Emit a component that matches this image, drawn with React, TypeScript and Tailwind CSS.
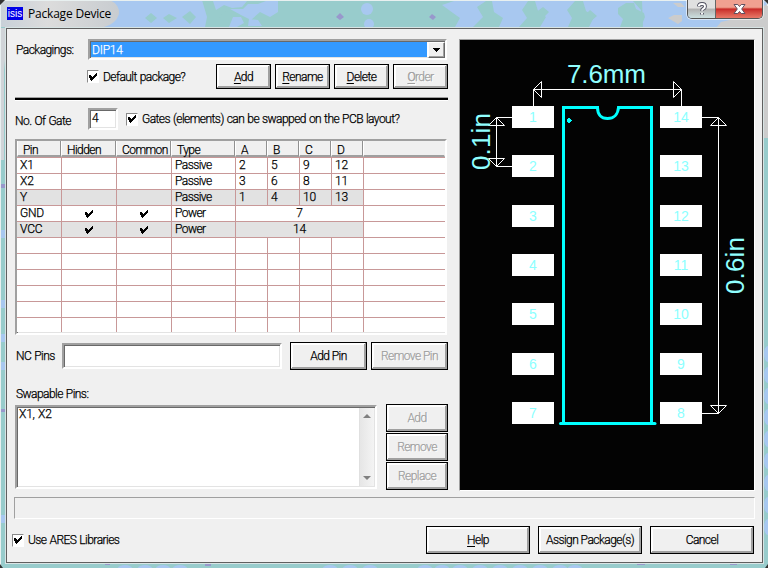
import React from "react";

const sunken =
  "border-2 border-t-[#a0a0a0] border-l-[#a0a0a0] border-r-white border-b-white shadow-[inset_1px_1px_0_#696969,inset_-1px_-1px_0_#e3e3e3]";

function Check() {
  return (
    <svg width="9" height="9" viewBox="0 0 9 9" shapeRendering="crispEdges" className="shrink-0">
      <path
        d="M7 0h1v1h-1zM6 1h2v1h-2zM0 2h2v1h-2zM5 2h3v1h-3zM0 3h3v1h-3zM4 3h3v1h-3zM0 4h6v1h-6zM1 5h4v1h-4zM1 6h3v1h-3zM2 7h1v1h-1z"
        fill="#000"
      />
    </svg>
  );
}

function CheckBox({ label }: { label: string }) {
  return (
    <div className="flex items-center gap-[4px]">
      <span className="flex h-[13px] w-[12px] shrink-0 items-center justify-center border border-b-white border-l-[#8a8a8a] border-r-white border-t-[#8a8a8a] bg-white pt-px">
        <Check />
      </span>
      <span>{label}</span>
    </div>
  );
}

function Button({ label, cls, hot, disabled }: { label: string; cls: string; hot?: boolean; disabled?: boolean }) {
  return (
    <button
      className={`flex shrink-0 items-center justify-center border border-black bg-[#f0f0f0] shadow-[inset_-1px_-1px_0_#a0a0a0,inset_1px_1px_0_#fff,inset_-2px_-2px_0_#a0a0a0,inset_2px_2px_0_#fff] ${
        disabled ? "text-[#a0a0a0] [text-shadow:1px_1px_0_#fff]" : "text-black"
      } ${cls}`}
    >
      <span>
        {hot ? <span className="underline underline-offset-2">{label[0]}</span> : label[0]}
        {label.slice(1)}
      </span>
    </button>
  );
}

const columns = ["Pin", "Hidden", "Common", "Type", "A", "B", "C", "D", ""];
const headWidths = ["w-[44px]", "w-[55px]", "w-[55px]", "w-[64px]", "w-[32px]", "w-[32px]", "w-[32px]", "w-[32px]", "w-[82px]"];
const widths = ["w-[45px]", "w-[55px]", "w-[55px]", "w-[64px]", "w-[32px]"];

type Row = { pin: string; flags?: boolean; type: string; gates?: string[]; shared?: string; shade?: boolean };
const rows: Row[] = [
  { pin: "X1", type: "Passive", gates: ["2", "5", "9", "12"] },
  { pin: "X2", type: "Passive", gates: ["3", "6", "8", "11"] },
  { pin: "Y", type: "Passive", gates: ["1", "4", "10", "13"], shade: true },
  { pin: "GND", type: "Power", flags: true, shared: "7" },
  { pin: "VCC", type: "Power", flags: true, shared: "14", shade: true },
  ...Array.from({ length: 6 }, () => ({ pin: "", type: "", gates: ["", "", "", ""] })),
];

function PinTable() {
  const line = "shrink-0 border-r border-b border-[#c89898] h-[16px] leading-[14px]";
  return (
    <div className={`mt-[9px] h-[196px] w-[432px] bg-white ${sunken}`}>
      <div className="-ml-px -mt-px h-[192px] overflow-hidden pl-px pt-px">
        <div className="flex h-[16px] bg-[#f0f0f0]">
          {columns.map((c, i) => (
            <div
              key={i}
              className={`${headWidths[i]} shrink-0 border-b-2 border-r border-b-[#a0a0a0] ${
                i === 8 ? "border-r-transparent" : "border-r-[#909090]"
              } border-l border-l-white pl-[5px] leading-[18px]`}
            >
              {c}
            </div>
          ))}
        </div>
        <div className="h-px bg-[#c89898]" />
        {rows.map((r, i) => {
          const bg = r.shade ? "bg-[#e2e2e2]" : "bg-white";
          return (
            <div key={i} className="flex h-[16px]">
              <div className={`${widths[0]} ${line} ${bg} pl-[3px] tracking-[-0.2px]`}>{r.pin}</div>
              {[1, 2].map((n) => (
                <div key={n} className={`${widths[n]} ${line} ${bg} flex items-center justify-center pt-px`}>
                  {r.flags && <Check />}
                </div>
              ))}
              <div className={`${widths[3]} ${line} ${bg} pl-[3px]`}>{r.type}</div>
              {r.gates ? (
                r.gates.map((g, n) => (
                  <div key={n} className={`${widths[4]} ${line} ${bg} pl-[3px] tracking-[-0.2px]`}>
                    {g}
                  </div>
                ))
              ) : (
                <div className={`w-[128px] text-center tracking-[-0.2px] ${line} ${bg}`}>{r.shared}</div>
              )}
              <div className="h-[16px] w-[81px] shrink-0 border-b border-[#c89898] bg-white" />
            </div>
          );
        })}
      </div>
    </div>
  );
}

const padY = [106, 155, 205, 254, 303, 353, 402];

function Footprint() {
  return (
    <svg
      width="294"
      height="450"
      viewBox="460 40 294 450"
      className="block bg-[#030303] font-normal tracking-normal [-webkit-text-stroke:0] [word-spacing:0]"
      fontFamily="'Liberation Sans', Arial, sans-serif"
    >
      {padY.map((y, i) => (
        <g key={y}>
          <rect x="512" y={y} width="42" height="22" fill="#fff" />
          <rect x="660" y={y} width="42" height="22" fill="#fff" />
          <g fill="#8cffff" fontSize="14" textAnchor="middle">
            <text x="533" y={y + 16}>{i + 1}</text>
            <text x="681" y={y + 16}>{14 - i}</text>
          </g>
        </g>
      ))}
      <g stroke="#00ffff" strokeWidth="3" fill="none">
        <path d="M563.5 423V107.5H597.5C597.5 114 601 118.5 607.5 118.5S618 114 618.5 107.5H651.5V423" />
        <path d="M560.5 423.5H655" strokeLinecap="round" />
      </g>
      <path d="M567 119h1v-1h2v1h1v1h1v1h-1v1h-1v1h-2v-1h-1z" fill="#00ffff" shapeRendering="crispEdges" />
      <g stroke="#fff" fill="none">
        <path d="M533.5 106V89.5H681.5V106" />
        <path d="M533.5 89.5L541.5 81.5V97.5ZM681.5 89.5L673.5 81.5V97.5Z" />
        <path d="M512 117.5H496.5V166.5H512" />
        <path d="M496.5 117.5L488.5 125.5H504.5ZM496.5 166.5L488.5 158.5H504.5Z" />
        <path d="M702 117.5H718.5V413.5H702" />
        <path d="M718.5 117.5L710.5 125.5H726.5ZM718.5 413.5L710.5 405.5H726.5Z" />
      </g>
      <g fill="#90ffff" fontSize="26">
        <text x="567" y="83" textLength="79">7.6mm</text>
        <text transform="translate(490 170) rotate(-90)" textLength="57">0.1in</text>
        <text transform="translate(744 294) rotate(-90)" textLength="57">0.6in</text>
      </g>
    </svg>
  );
}

function FrameBackdrop() {
  return (
    <svg className="absolute inset-0" width="768" height="568" viewBox="0 0 768 568">
      <defs>
        <linearGradient id="glow" x1="0" x2="1">
          <stop offset="0" stopColor="#c8d0d8" />
          <stop offset=".4" stopColor="#dcdcdc" />
          <stop offset="1" stopColor="#c8ccd0" />
        </linearGradient>
      </defs>
      <rect width="768" height="568" fill="#98cccc" />
      <path d="M0 0H212V27H0Z" fill="#a8c8f0" />
      <path d="M0 28H7V40L4 70V160H0Z" fill="#d0d4d8" />
      <path d="M0 0H110Q120 5 119 14Q116 24 104 27H0Z" fill="url(#glow)" />
      <g fill="#98cccc">
        <path d="M145 18l6-5 6 5-6 5zM163 18l6-4 8 4-8 5zM182 17l8-6 6 6-6 7zM202 0h12v27h-9l2-10zM219 17l8-6 9 6-9 5z" />
      </g>
      <g fill="#a8c8f0">
        <path d="M213 1h34l-5 6-10 1-8-3-8 5zM230 9h13l5-5h10l8-3h12v11l-8 5-10-5-9 8-10-5zM233 17l8 0 3 6-7 4h-8zM249 19l9 1 4 6h-14z" />
        <circle cx="367" cy="9" r="6" />
        <circle cx="369" cy="24" r="5" />
        <path d="M442 5l12-4h32l-9 6 6 10-10 10h-18l5-9-7-5z" />
        <path d="M492 1h36l-6 9 5 8-8 9h-20l4-9-9-6z" />
        <path d="M535 1h40l-8 9 5 8-4 9h-28l6-10-8-6z" />
        <path d="M583 1h50l8 9-3 17h-49l5-10-8-6z" />
        <path d="M642 0h126v27H643z" />
      </g>
      <path d="M535 13l8-6 6 5-7 7zM584 16l6-6 7 6-6 5z" fill="#98cccc" />
      <path d="M618 8l8-5h8l2 6 8 4 1 4-4 10h-21l3-8-5-5z" fill="#98cccc" />
      <g fill="#ccc">
        <path d="M668 18l6-3h8v6l-4 3zM673 3h8l4 4h-7zM721 22l17-4 30-14v24h-52z" />
        <path d="M763 28h5v110h-5z" />
      </g>
      <g fill="#9898cc">
        <path d="M336 17l4-4 4 4-4 3zM429 17l3-3 4 3-3 3zM105 563h5v2h-5zM205 564h6v2h-6zM637 563h8v2h-8zM730 563h7v2h-7zM1 184h5v4H1zM1 409h5v3H1z" />
      </g>
      <g fill="#a8c8f0">
        {[230, 300, 334, 362, 515].map((y) => (
          <rect key={y} x="1" y={y} width="4" height="8" />
        ))}
        {[345, 366, 387, 408, 430, 452, 474, 496, 518].map((y) => (
          <ellipse key={y} cx="768" cy={y + 9} rx="4" ry="8" />
        ))}
        {[125, 145, 163, 180, 330, 350, 370, 425, 442, 460, 480, 500, 520, 540, 560, 575].map((x) => (
          <ellipse key={x} cx={x} cy="568" rx="7" ry="3" />
        ))}
      </g>
      <path d="M.5 568V5Q.5 .5 6 .5H762Q767.5 .5 767.5 6" fill="none" stroke="#e8f0f0" />
      <path d="M0 0H5L0 5ZM768 0V4L764 0ZM768 568H765L768 564ZM0 568V564L3 568Z" fill="#333" />
    </svg>
  );
}

function TitleBar() {
  return (
    <div className="relative flex h-[28px] shrink-0 items-start pl-[7px] font-normal tracking-normal [-webkit-text-stroke:0] [word-spacing:0]">
      <div className="mt-[7px] flex h-[13px] w-[16px] items-center justify-center bg-[#0000e8] font-['Liberation_Sans',sans-serif] text-[10px] leading-none text-white">
        isis
      </div>
      <div className="ml-[5px] mt-[5px] font-['Open_Sans','Noto_Sans',sans-serif] text-[12px] leading-[17px] tracking-[-0.2px] text-black">
        Package Device
      </div>
      <div className="ml-auto mr-[5px] flex h-[19px] w-[76px] overflow-hidden rounded-b-[5px] border border-t-0 border-[#555] shadow-[0_0_0_1px_#ffffff90]">
        <div className="flex w-[28px] items-center justify-center border-r border-[#666] bg-linear-to-b from-[#e0e0e0] from-45% via-[#b0b0b0] via-50% to-[#cce0e0]">
          <svg width="12" height="14" viewBox="0 0 12 14" fill="none">
            <path d="M2.8 4.5Q3 2 6 2T9 4.4Q9 6 7.2 6.8Q6 7.4 6 8.8M6 11v1.6" stroke="#505060" strokeWidth="3.8" />
            <path d="M2.8 4.2Q3 2 6 2T9 4.4Q9 6 7.2 6.8Q6 7.4 6 8.8M6 10.8v1.8" stroke="#fff" strokeWidth="1.9" />
          </svg>
        </div>
        <div className="flex flex-1 items-center justify-center bg-linear-to-b from-[#f0a090] from-40% via-[#c82828] via-50% to-[#e87868]">
          <svg width="13" height="12" viewBox="0 0 13 12">
            <path
              d="M1 1.5h3.8l1.7 2 1.7-2H12L8.7 6l3.3 4.5H8.2l-1.7-2-1.7 2H1L4.3 6z"
              fill="#fff"
              stroke="#605060"
            />
          </svg>
        </div>
      </div>
    </div>
  );
}

export default function App() {
  return (
    <div className="relative flex h-[568px] w-[768px] flex-col overflow-hidden whitespace-nowrap font-[Roboto,'Liberation_Sans',sans-serif] text-[12px] font-light leading-[14px] tracking-[-0.55px] text-black [-webkit-text-stroke:0.25px] [word-spacing:0.6px]">
      <FrameBackdrop />
      <TitleBar />
      <div className="relative ml-[6px] h-[535px] w-[757px] border border-[#606060] bg-[#f0f0f0] shadow-[0_0_0_1px_#d8e4e4]">
        <div className="flex gap-[11px] pl-[8px] pt-[10px]">
          <div className="w-[433px]">
            <div className="flex h-[21px] items-center">
              <div className="w-[73px] pl-px">Packagings:</div>
              <div className={`flex h-[21px] w-[359px] bg-white p-px pr-0 ${sunken}`}>
                <div className="h-[15px] flex-1 bg-[#3399ff] pl-px leading-[17px] tracking-[-0.2px] text-white">DIP14</div>
                <div className="ml-px flex h-[16px] w-[17px] items-center justify-center border border-b-[#696969] border-l-white border-r-[#696969] border-t-white bg-[#f0f0f0] shadow-[inset_-1px_-1px_0_#a0a0a0]">
                  <svg width="7" height="4" shapeRendering="crispEdges">
                    <path d="M0 0h7v1h-1v1h-1v1h-1v1h-1v-1h-1v-1h-1v-1h-1z" />
                  </svg>
                </div>
              </div>
            </div>
            <div className="mt-[4px] flex h-[25px] items-center pl-[72px]">
              <div className="w-[129px]">
                <CheckBox label="Default package?" />
              </div>
              <div className="flex gap-[4px]">
                <Button label="Add" hot cls="h-[25px] w-[55px]" />
                <Button label="Rename" hot cls="h-[25px] w-[55px]" />
                <Button label="Delete" hot cls="h-[25px] w-[55px]" />
                <Button label="Order" hot disabled cls="h-[25px] w-[55px]" />
              </div>
            </div>
            <div className="mt-[8px] h-[4px] border-b border-t border-b-white border-t-[#a0a0a0] bg-black" />
            <div className="mt-[7px] flex h-[22px]">
              <div className="w-[73px] pt-[6px]">No. Of Gate</div>
              <div className={`w-[30px] bg-white pl-[2px] leading-[16px] ${sunken}`}>4</div>
              <div className="ml-[8px] pt-[4px]">
                <CheckBox label="Gates (elements) can be swapped on the PCB layout?" />
              </div>
            </div>
            <PinTable />
            <div className="mt-[7px] flex h-[28px] items-center">
              <div className="w-[47px] pl-px">NC Pins</div>
              <div className={`h-[26px] w-[220px] bg-white ${sunken}`} />
              <Button label="Add Pin" cls="ml-[8px] h-[28px] w-[77px]" />
              <Button label="Remove Pin" disabled cls="ml-[4px] h-[28px] w-[77px]" />
            </div>
            <div className="h-[34px] pl-px pt-[17px]">Swapable Pins:</div>
            <div className="flex justify-between">
              <div className={`mt-px flex h-[84px] w-[362px] justify-between bg-white ${sunken}`}>
                <div className="pl-[2px] tracking-[-0.2px]">X1, X2</div>
                <div className="my-px mr-px flex w-[15px] flex-col items-center justify-between border-l border-[#e0e0e0] bg-linear-to-r from-[#e6e6e6] to-[#f4f4f4] py-[6px]">
                  <svg width="8" height="4"><path d="M0 4L4 0L8 4Z" fill="#808080" /></svg>
                  <svg width="8" height="4"><path d="M0 0L4 4L8 0Z" fill="#808080" /></svg>
                </div>
              </div>
              <div className="flex flex-col gap-px">
                <Button label="Add" disabled cls="h-[28px] w-[62px]" />
                <Button label="Remove" disabled cls="h-[28px] w-[62px]" />
                <Button label="Replace" disabled cls="h-[28px] w-[62px]" />
              </div>
            </div>
          </div>
          <div className="h-[452px] w-[296px] border border-b-white border-l-[#a0a0a0] border-r-white border-t-[#a0a0a0]">
            <Footprint />
          </div>
        </div>
        <div className="ml-[7px] mt-[6px] h-[22px] w-[741px] border border-b-white border-l-[#a0a0a0] border-r-white border-t-[#a0a0a0]" />
        <div className="mt-[7px] flex h-[28px] items-center pl-[5px]">
          <div className="w-[414px]">
            <CheckBox label="Use ARES Libraries" />
          </div>
          <div className="flex gap-[8px]">
            <Button label="Help" hot cls="h-[28px] w-[104px]" />
            <Button label="Assign Package(s)" cls="h-[28px] w-[104px]" />
            <Button label="Cancel" cls="h-[28px] w-[104px]" />
          </div>
        </div>
      </div>
    </div>
  );
}
